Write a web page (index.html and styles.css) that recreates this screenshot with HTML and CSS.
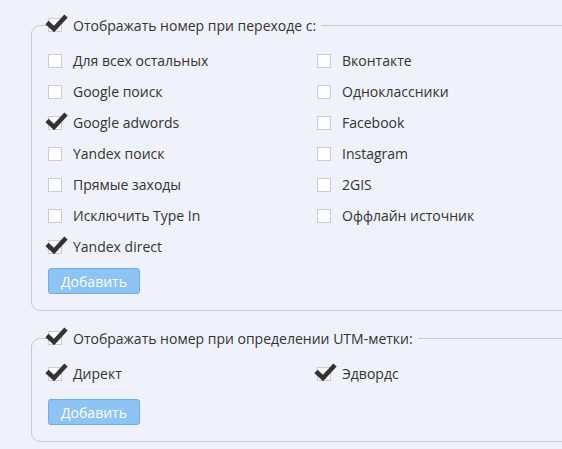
FILE: index.html
```html
<!DOCTYPE html>
<html lang="ru">
  <head>
    <meta charset="UTF-8" />
    <title>Подмена номера</title>
    <link rel="stylesheet" href="styles.css">
  </head>
  <body>
    <div class="page">
      <fieldset class="group">
        <legend class="group-title">
          <label class="check"><span class="box on"></span>Отображать номер при переходе с:</label>
        </legend>
        <div class="options">
          <label class="check"><span class="box"></span>Для всех остальных</label>
          <label class="check"><span class="box"></span>Вконтакте</label>
          <label class="check"><span class="box"></span>Google поиск</label>
          <label class="check"><span class="box"></span>Одноклассники</label>
          <label class="check"><span class="box on"></span>Google adwords</label>
          <label class="check"><span class="box"></span>Facebook</label>
          <label class="check"><span class="box"></span>Yandex поиск</label>
          <label class="check"><span class="box"></span>Instagram</label>
          <label class="check"><span class="box"></span>Прямые заходы</label>
          <label class="check"><span class="box"></span>2GIS</label>
          <label class="check"><span class="box"></span>Исключить Type In</label>
          <label class="check"><span class="box"></span>Оффлайн источник</label>
          <label class="check"><span class="box on"></span>Yandex direct</label>
        </div>
        <button class="btn">Добавить</button>
      </fieldset>

      <fieldset class="group">
        <legend class="group-title">
          <label class="check"><span class="box on"></span>Отображать номер при определении UTM-метки:</label>
        </legend>
        <div class="options">
          <label class="check"><span class="box on"></span>Директ</label>
          <label class="check"><span class="box on"></span>Эдвордс</label>
        </div>
        <button class="btn btn-spaced">Добавить</button>
      </fieldset>
    </div>

    <script>
      // галочка поверх отмеченных квадратиков
      document.querySelectorAll(".box.on").forEach(function (box) {
        box.innerHTML =
          '<svg class="tick" width="24" height="18" viewBox="0 0 24 18">' +
          '<polyline points="2,8.5 9,15 21,2" fill="none" stroke="#333" stroke-width="4.6"/></svg>';
      });
    </script>
  </body>
</html>
```

FILE: styles.css
```css
html,
body {
  overflow: hidden;
}
body {
  margin: 0;
  background-color: #eff2fa;
  font-family: "Open Sans", "Noto Sans", sans-serif;
  font-size: 14px;
  color: #333;
}
.page {
  padding: 14px 0 0 31px;
  width: 640px;
}
.group {
  margin: 0 0 16px 0;
  padding: 9px 16px 16px 16px;
  border: 1px solid #c6c9d2;
  border-radius: 9px;
}
.group-title {
  padding: 0 5px 0 0;
  margin-left: 0;
}
.options {
  display: grid;
  grid-template-columns: 269px 269px;
}
.check {
  display: flex;
  align-items: center;
  height: 31px;
  cursor: pointer;
}
.group-title .check {
  height: 22px;
}
.box {
  position: relative;
  width: 12px;
  height: 12px;
  margin-right: 11px;
  background: #fff;
  border: 1px solid #c9ccd6;
  flex: none;
}
.tick {
  position: absolute;
  left: -4px;
  top: -5px;
}
.btn {
  display: block;
  margin-top: 6px;
  width: 92px;
  height: 26px;
  padding: 0;
  font-family: inherit;
  font-size: 14px;
  color: #fff;
  background-color: #8ec4f4;
  border: 1px solid #6cacea;
  border-radius: 3px;
  cursor: pointer;
}
.btn-spaced {
  margin-top: 10px;
}
```
